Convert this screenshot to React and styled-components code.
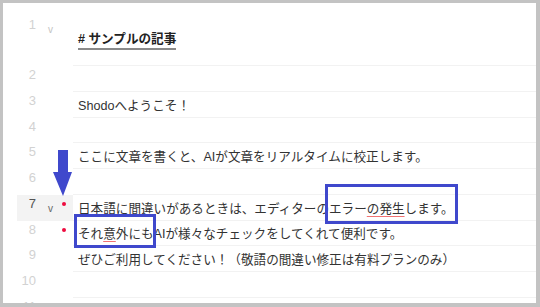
import React from 'react';
import styled, { createGlobalStyle } from 'styled-components';

const GlobalStyle = createGlobalStyle`
    html, body {
        margin: 0;
        padding: 0;
        background: #ffffff;
    }
`

const Frame = styled.div`
    position: relative;
    box-sizing: border-box;
    width: 540px;
    height: 307px;
    overflow: hidden;
    background: #ffffff;
    border: 3px solid #c3c3c3;
    border-right-width: 4px;
    border-bottom-width: 4px;
    padding-top: 13px;
    font-family: "Liberation Sans", "Noto Sans CJK JP", sans-serif;
`

const Row = styled.div`
    display: flex;
    height: ${p => p.h}px;
`

const Gutter = styled.div`
    display: flex;
    flex: 0 0 56px;
    margin-left: 14px;
    background: ${p => p.active ? '#f3f3f3' : 'transparent'};
`

const LineNo = styled.div`
    width: 19px;
    padding-top: 1px;
    text-align: right;
    font-size: 13px;
    line-height: 16px;
    color: ${p => p.active ? '#555555' : '#d2d2d2'};
`

const Fold = styled.div`
    width: 17px;
    padding-top: 8px;
    text-align: right;
    font-size: 10px;
    line-height: 12px;
    color: ${p => p.active ? '#666666' : '#c4c4c4'};
`

const DotCell = styled.div`
    flex: 1;
    padding: 7px 0 0 9px;
`

const Dot = styled.span`
    display: block;
    width: 4px;
    height: 4px;
    border-radius: 50%;
    background: #ee0b3f;
`

const Line = styled.div`
    flex: 1;
    display: flex;
    align-items: center;
    padding-left: 5px;
    border-bottom: 1px solid #f2f2f2;
    font-size: 12.6px;
    color: #333333;
    white-space: nowrap;
`

const Heading = styled.span`
    display: inline-block;
    font-weight: bold;
    color: #222222;
    line-height: 16px;
    padding-bottom: 1px;
    border-bottom: 2px solid #8a8a8a;
`

const Typo = styled.span`
    text-decoration: underline;
    text-decoration-color: #f27373;
    text-decoration-thickness: 1px;
    text-underline-offset: 3px;
`

const Marked = styled.span`
    position: relative;

    &::after {
        content: '';
        position: absolute;
        left: ${p => p.l}px;
        right: ${p => p.r}px;
        top: ${p => p.t}px;
        bottom: ${p => p.b}px;
        border: 3px solid #3f48cc;
        pointer-events: none;
    }
`

const Arrow = styled.svg`
    position: absolute;
    left: 50px;
    top: 147px;
`

const rows = [
    { n: 1, h: 50, fold: true, body: <Heading># サンプルの記事</Heading> },
    { n: 2 },
    { n: 3, body: 'Shodoへようこそ！' },
    { n: 4 },
    { n: 5, body: 'ここに文章を書くと、AIが文章をリアルタイムに校正します。' },
    { n: 6 },
    {
        n: 7, active: true, fold: true, dot: true,
        body: <>日本語に間違いがあるときは、エディターの<Marked l={-4} r={-4} t={-14} b={-7}>エラー<Typo>の発生</Typo>します。</Marked></>
    },
    {
        n: 8, dot: true,
        body: <><Marked l={-4} r={-2} t={-9} b={-6}>それ<Typo>意</Typo>外にも</Marked>AIが様々なチェックをしてくれて便利です。</>
    },
    { n: 9, body: 'ぜひご利用してください！（敬語の間違い修正は有料プランのみ）' },
    { n: 10 },
    { n: 11 },
]

const App = () => {
    return (
        <>
            <GlobalStyle />
            <Frame>
                {rows.map(r => (
                    <Row key={r.n} h={r.h || 25.75}>
                        <Gutter active={r.active}>
                            <LineNo active={r.active}>{r.n}</LineNo>
                            <Fold active={r.active}>{r.fold ? 'v' : ''}</Fold>
                            <DotCell>{r.dot && <Dot />}</DotCell>
                        </Gutter>
                        <Line>{r.body}</Line>
                    </Row>
                ))}
                <Arrow width="20" height="46" viewBox="0 0 20 46">
                    <polygon points="5,0 15,0 15,22 19,22 10,46 0,22 5,22" fill="#3f48cc" />
                </Arrow>
            </Frame>
        </>
    )
}

export default App;
